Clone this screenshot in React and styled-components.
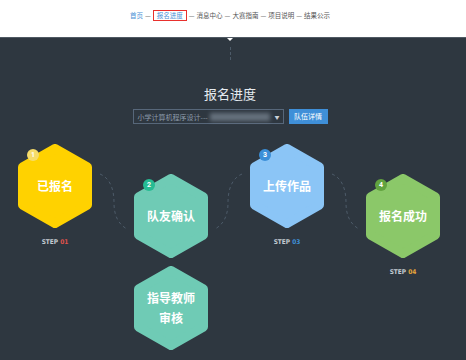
import styled, { createGlobalStyle } from "styled-components";

const GlobalStyle = createGlobalStyle`
  html, body { margin: 0; padding: 0; background: #fff; }
  body { font-family: "Noto Sans CJK SC", "Noto Sans", sans-serif; }
`;

const steps = [
  { no: 1, label: ["已报名"], fill: "#ffd200", badge: "#f6dc6a", step: "01", stepColor: "#e0524c", drop: false },
  { no: 2, label: ["队友确认"], fill: "#6fcbb5", badge: "#26bb93", drop: true, extra: ["指导教师", "审核"] },
  { no: 3, label: ["上传作品"], fill: "#8bc5f6", badge: "#3b8fd8", step: "03", stepColor: "#3f8fd6", drop: false },
  { no: 4, label: ["报名成功"], fill: "#8bc869", badge: "#62a33f", step: "04", stepColor: "#e6a53a", drop: true },
];

const navItems = ["首页", "报名进度", "消息中心", "大赛指南", "项目说明", "结果公示"];

export default function App() {
  return (
    <>
      <GlobalStyle />
      <Nav>
        {navItems.map((t, i) => (
          <NavPart key={t}>
            {i > 0 && <Sep>—</Sep>}
            <NavLink $active={i < 2} $boxed={i === 1}>{t}</NavLink>
          </NavPart>
        ))}
      </Nav>
      <Panel>
        <Title>报名进度</Title>
        <Controls>
          <Select>
            <SelectText>小学计算机程序设计---</SelectText>
            <Redacted />
            <Caret>▼</Caret>
          </Select>
          <DetailBtn>队伍详情</DetailBtn>
        </Controls>
        <Track>
          {steps.map((s, i) => (
            <Group key={s.no}>
              {i > 0 && <Connector flip={i === 2} />}
              <Column $drop={s.drop}>
                <Hex fill={s.fill} badge={s.badge} no={s.no} label={s.label} />
                {s.extra && (
                  <Spaced>
                    <Hex fill={s.fill} label={s.extra} />
                  </Spaced>
                )}
                {s.step && (
                  <Step>
                    STEP <StepNo $color={s.stepColor}>{s.step}</StepNo>
                  </Step>
                )}
              </Column>
            </Group>
          ))}
        </Track>
      </Panel>
    </>
  );
}

function Hex({ fill, badge, no, label }) {
  return (
    <HexBox>
      <HexShape viewBox="0 0 74 84" width="74" height="84">
        <polygon
          points="37,4.5 69.5,23 69.5,61 37,79.5 4.5,61 4.5,23"
          fill={fill}
          stroke={fill}
          strokeWidth="9"
          strokeLinejoin="round"
        />
      </HexShape>
      <HexLabel>
        {label.map((l) => (
          <div key={l}>{l}</div>
        ))}
      </HexLabel>
      {no && <Badge $bg={badge}>{no}</Badge>}
    </HexBox>
  );
}

function Connector({ flip }) {
  return (
    <Conn $flip={flip}>
      <svg width="42" height="58" viewBox="0 0 42 58">
        <path
          d="M8 1 C20 6, 22 20, 22 30 C22 42, 26 51, 35 56"
          fill="none"
          stroke="#4d5b69"
          strokeWidth="1"
          strokeDasharray="3 3"
        />
      </svg>
    </Conn>
  );
}

const Nav = styled.div`
  height: 37px;
  box-sizing: border-box;
  padding: 9px 6px 0 0;
  display: flex;
  justify-content: center;
  align-items: flex-start;
  font-size: 6.5px;
  line-height: 12px;
`;

const NavPart = styled.span`
  display: flex;
  align-items: center;
`;

const Sep = styled.span`
  color: #555;
  margin: 0 2px;
`;

const NavLink = styled.span`
  color: ${(p) => (p.$active ? "#4a8fd6" : "#555")};
  border: ${(p) => (p.$boxed ? "1.5px solid #e8302d" : "none")};
  padding: ${(p) => (p.$boxed ? "0 3px" : "0")};
  line-height: ${(p) => (p.$boxed ? "9px" : "12px")};
`;

const Panel = styled.div`
  position: relative;
  height: 323px;
  box-sizing: border-box;
  background: #2e3740;
  border-top: 1px solid #4f5963;
  padding: 47px 6px 0 0;
  overflow: hidden;
  &::before {
    content: "";
    position: absolute;
    top: -1px;
    left: 226px;
    border-left: 4px solid transparent;
    border-right: 4px solid transparent;
    border-top: 4px solid #fff;
  }
  &::after {
    content: "";
    position: absolute;
    top: 9px;
    left: 229.5px;
    height: 13px;
    border-left: 1px dashed #4d5b69;
  }
`;

const Title = styled.div`
  text-align: center;
  color: #e6ebf0;
  font-size: 13px;
  line-height: 18px;
`;

const Controls = styled.div`
  margin-top: 6px;
  display: flex;
  justify-content: center;
  gap: 5px;
`;

const Select = styled.div`
  width: 151px;
  height: 15px;
  box-sizing: border-box;
  border: 1px solid #57677a;
  display: flex;
  align-items: center;
  padding: 0 3px 0 4px;
  font-size: 7px;
`;

const SelectText = styled.span`
  color: #8d9cab;
  white-space: nowrap;
`;

const Redacted = styled.span`
  width: 60px;
  height: 8px;
  margin-left: 2px;
  background: rgba(170, 185, 200, 0.45);
  filter: blur(2px);
`;

const Caret = styled.span`
  margin-left: auto;
  color: #c9d1d8;
  font-size: 5px;
`;

const DetailBtn = styled.div`
  width: 39px;
  height: 15px;
  background: #3f8fd8;
  color: #fff;
  font-size: 7px;
  line-height: 15px;
  text-align: center;
`;

const Track = styled.div`
  margin-top: 20px;
  padding-left: 18px;
  display: flex;
  align-items: flex-start;
`;

const Group = styled.div`
  display: flex;
  align-items: flex-start;
`;

const Conn = styled.div`
  width: 42px;
  height: 58px;
  margin-top: 29px;
  transform: ${(p) => (p.$flip ? "scaleX(-1)" : "none")};
  svg { display: block; }
`;

const Column = styled.div`
  display: flex;
  flex-direction: column;
  align-items: center;
  margin-top: ${(p) => (p.$drop ? "30px" : "0")};
`;

const Spaced = styled.div`
  margin-top: 8px;
`;

const HexBox = styled.div`
  position: relative;
  width: 74px;
  height: 84px;
  display: flex;
  align-items: center;
  justify-content: center;
`;

const HexShape = styled.svg`
  position: absolute;
  inset: 0;
`;

const HexLabel = styled.div`
  position: relative;
  color: #fff;
  font-weight: 700;
  font-size: 12px;
  line-height: 20px;
  text-align: center;
`;

const Badge = styled.div`
  position: absolute;
  left: 9px;
  top: 5px;
  width: 12px;
  height: 12px;
  border-radius: 50%;
  background: ${(p) => p.$bg};
  color: #fff;
  font-family: "Roboto", sans-serif;
  font-weight: 700;
  font-size: 7px;
  line-height: 12px;
  text-align: center;
`;

const Step = styled.div`
  margin-top: 9px;
  font-family: "DejaVu Sans Condensed", "Roboto", sans-serif;
  font-weight: 700;
  font-size: 6.5px;
  line-height: 10px;
  color: #c3cad2;
  letter-spacing: 0;
`;

const StepNo = styled.span`
  color: ${(p) => p.$color};
`;
